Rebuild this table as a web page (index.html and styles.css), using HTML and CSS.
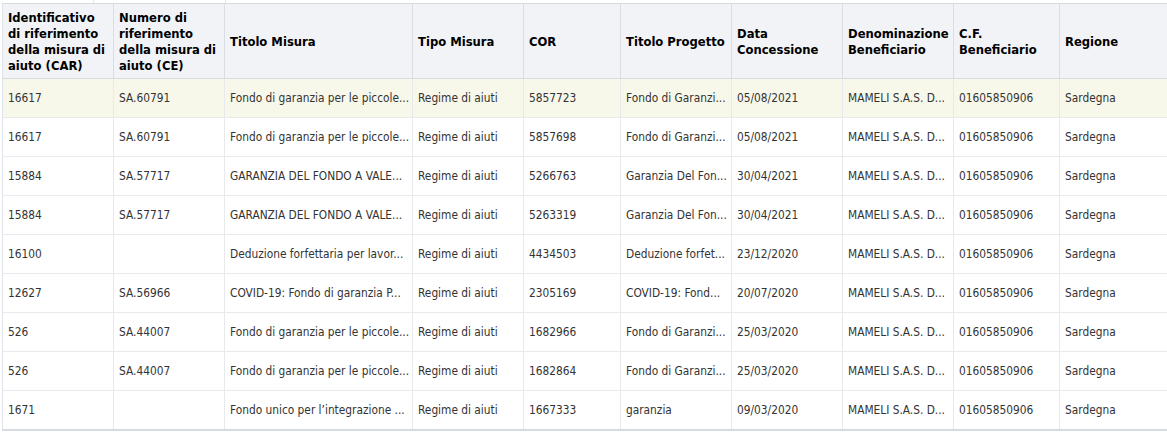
FILE: index.html
```html
<!DOCTYPE html>
<html lang="it">
<head>
<meta charset="utf-8">
<title>Aiuti</title>
<link rel="stylesheet" href="styles.css">
</head>
<body>
<div class="grid-wrap">
  <div class="top-strip">
    <span class="ts ts1"></span><span class="ts ts2"></span><span class="ts ts3"></span>
  </div>
  <table class="grid">
    <colgroup>
      <col class="c-car"><col class="c-ce"><col class="c-titolo"><col class="c-tipo"><col class="c-cor"><col class="c-prog"><col class="c-data"><col class="c-den"><col class="c-cf"><col class="c-reg">
    </colgroup>
    <thead>
      <tr>
        <th>Identificativo di riferimento della misura di aiuto (CAR)</th>
        <th>Numero di riferimento della misura di aiuto (CE)</th>
        <th>Titolo Misura</th>
        <th>Tipo Misura</th>
        <th>COR</th>
        <th>Titolo Progetto</th>
        <th>Data Concessione</th>
        <th>Denominazione Beneficiario</th>
        <th>C.F. Beneficiario</th>
        <th>Regione</th>
      </tr>
    </thead>
    <tbody>
      <tr class="selected">
        <td>16617</td><td>SA.60791</td><td>Fondo di garanzia per le piccole...</td><td>Regime di aiuti</td><td>5857723</td><td>Fondo di Garanzi...</td><td>05/08/2021</td><td>MAMELI S.A.S. D...</td><td>01605850906</td><td>Sardegna</td>
      </tr>
      <tr>
        <td>16617</td><td>SA.60791</td><td>Fondo di garanzia per le piccole...</td><td>Regime di aiuti</td><td>5857698</td><td>Fondo di Garanzi...</td><td>05/08/2021</td><td>MAMELI S.A.S. D...</td><td>01605850906</td><td>Sardegna</td>
      </tr>
      <tr>
        <td>15884</td><td>SA.57717</td><td>GARANZIA DEL FONDO A VALE...</td><td>Regime di aiuti</td><td>5266763</td><td>Garanzia Del Fon...</td><td>30/04/2021</td><td>MAMELI S.A.S. D...</td><td>01605850906</td><td>Sardegna</td>
      </tr>
      <tr>
        <td>15884</td><td>SA.57717</td><td>GARANZIA DEL FONDO A VALE...</td><td>Regime di aiuti</td><td>5263319</td><td>Garanzia Del Fon...</td><td>30/04/2021</td><td>MAMELI S.A.S. D...</td><td>01605850906</td><td>Sardegna</td>
      </tr>
      <tr>
        <td>16100</td><td></td><td>Deduzione forfettaria per lavor...</td><td>Regime di aiuti</td><td>4434503</td><td>Deduzione forfet...</td><td>23/12/2020</td><td>MAMELI S.A.S. D...</td><td>01605850906</td><td>Sardegna</td>
      </tr>
      <tr>
        <td>12627</td><td>SA.56966</td><td>COVID-19: Fondo di garanzia P...</td><td>Regime di aiuti</td><td>2305169</td><td>COVID-19: Fond...</td><td>20/07/2020</td><td>MAMELI S.A.S. D...</td><td>01605850906</td><td>Sardegna</td>
      </tr>
      <tr>
        <td>526</td><td>SA.44007</td><td>Fondo di garanzia per le piccole...</td><td>Regime di aiuti</td><td>1682966</td><td>Fondo di Garanzi...</td><td>25/03/2020</td><td>MAMELI S.A.S. D...</td><td>01605850906</td><td>Sardegna</td>
      </tr>
      <tr>
        <td>526</td><td>SA.44007</td><td>Fondo di garanzia per le piccole...</td><td>Regime di aiuti</td><td>1682864</td><td>Fondo di Garanzi...</td><td>25/03/2020</td><td>MAMELI S.A.S. D...</td><td>01605850906</td><td>Sardegna</td>
      </tr>
      <tr>
        <td>1671</td><td></td><td>Fondo unico per l’integrazione ...</td><td>Regime di aiuti</td><td>1667333</td><td>garanzia</td><td>09/03/2020</td><td>MAMELI S.A.S. D...</td><td>01605850906</td><td>Sardegna</td>
      </tr>
    </tbody>
  </table>
</div>
</body>
</html>
```

FILE: styles.css
```css
html, body {
  margin: 0;
  padding: 0;
  background: #ffffff;
}

body {
  font-family: "DejaVu Sans Condensed", "DejaVu Sans", sans-serif;
  font-size: 11.8px;
  color: #333333;
  overflow: hidden;
}

.grid-wrap {
  width: 1180px;
  padding-left: 2px;
}

.top-strip {
  display: flex;
  height: 3px;
}

.ts {
  display: block;
  height: 3px;
}
.ts1 { width: 91px; }
.ts2 { width: 131px; border-left: 1px solid #e3e5ea; }
.ts3 { width: 100px; border-left: 1px solid #e3e5ea; }

.grid {
  border-collapse: collapse;
  table-layout: fixed;
  width: 1178px;
  border-top: 1px solid #d6dae1;
  border-left: 1px solid #dfe2e8;
  border-bottom: 2px solid #d6dbe2;
}

.c-car { width: 111px; }
.c-ce { width: 111px; }
.c-titolo { width: 188px; }
.c-tipo { width: 111px; }
.c-cor { width: 97px; }
.c-prog { width: 111px; }
.c-data { width: 111px; }
.c-den { width: 111px; }
.c-cf { width: 106px; }
.c-reg { width: 121px; }

.grid th {
  background: #f2f3f7;
  color: #000000;
  font-weight: bold;
  font-size: 12.9px;
  line-height: 16px;
  text-align: left;
  vertical-align: middle;
  padding: 3px 5px 2px 5px;
  height: 69px;
  border-right: 1px solid #d9dde4;
  border-bottom: 1px solid #d6dbe2;
}

.grid td {
  height: 38px;
  padding: 0 5px;
  line-height: 16px;
  white-space: nowrap;
  overflow: hidden;
  text-overflow: clip;
  border-right: 1px solid #e8e9ec;
  border-bottom: 1px solid #e8e9ec;
  color: #333333;
}

.grid tr.selected td {
  background: #f8f8ea;
}
```
